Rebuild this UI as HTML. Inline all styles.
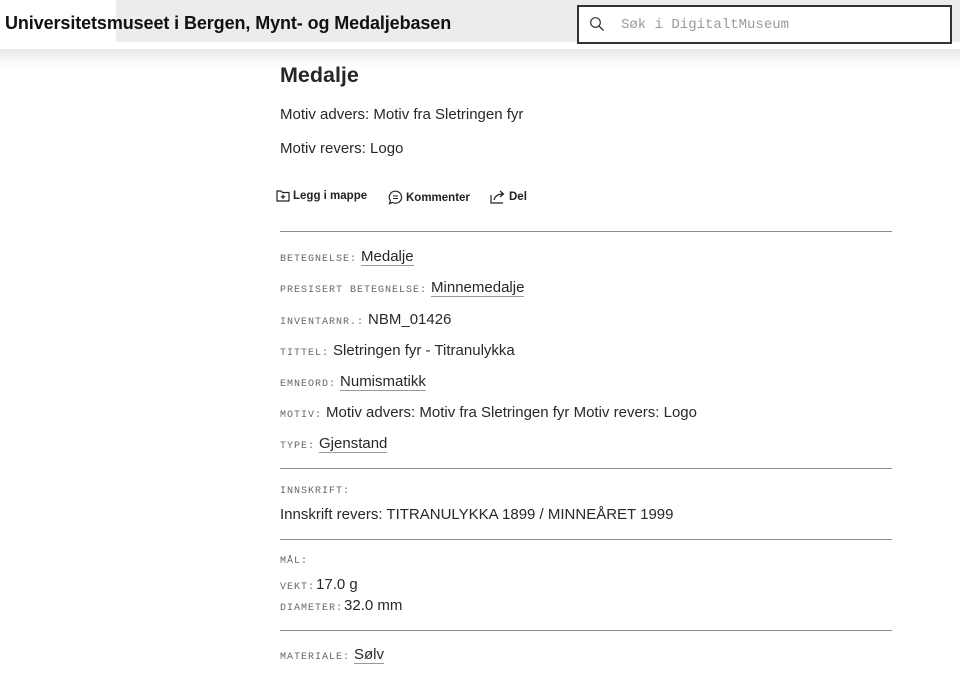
<!DOCTYPE html>
<html><head><meta charset="utf-8"><style>
*{margin:0;padding:0;box-sizing:border-box}
body{width:960px;height:678px;overflow:hidden;background:#fff;font-family:"Liberation Sans",sans-serif;color:#2b2727;position:relative}
.abs{position:absolute;white-space:nowrap}
.grayhdr{position:absolute;left:116px;top:0;width:844px;height:42px;background:#ececec}
.shadow{position:absolute;left:0;top:49px;width:960px;height:18px;background:linear-gradient(#e8e8e8,#fff)}
.title{left:5px;top:13px;font-size:18px;font-weight:bold;color:#111;letter-spacing:-0.1px}
.search{position:absolute;left:577px;top:5px;width:375px;height:39px;border:2px solid #333;background:#fff}
.ph{left:42px;top:10px;font-family:"Liberation Mono",monospace;font-size:14px;color:#999}
h1{position:absolute;left:280px;top:63px;font-size:21.5px;font-weight:bold;color:#2b2525}
.p{left:280px;font-size:15px}
.act{top:190px;font-size:11.5px;font-weight:bold;color:#222;display:flex;align-items:center;gap:3px}
.hr{position:absolute;left:280px;width:612px;height:1px;background:#8a8a8a}
.row{left:280px;font-size:15px;display:flex;align-items:baseline}
.lb{font-family:"Liberation Mono",monospace;font-size:10px;letter-spacing:1px;color:#666;margin-right:4px}
.u{border-bottom:1px solid #999}
</style></head><body>
<div class="grayhdr"></div>
<div class="shadow"></div>
<div class="abs title">Universitetsmuseet i Bergen, Mynt- og Medaljebasen</div>
<div class="search">
<svg style="position:absolute;left:10px;top:9px" width="16" height="16" viewBox="0 0 16 16"><circle cx="6.5" cy="6.5" r="4.8" fill="none" stroke="#333" stroke-width="1.2"/><path d="M10 10l4.5 4.5" stroke="#333" stroke-width="1.3"/></svg>
<div class="abs ph">Søk i DigitaltMuseum</div>
</div>
<h1>Medalje</h1>
<div class="abs p" style="top:106px">Motiv advers: Motiv fra Sletringen fyr</div>
<div class="abs p" style="top:140px">Motiv revers: Logo</div>
<div class="abs act" style="left:276px"><svg width="14" height="12" viewBox="0 0 14 12"><path d="M1 1h4l1.5 1.5H13V11H1z" fill="none" stroke="#222" stroke-width="1.2"/><path d="M7 4.5v4.5M4.8 6.75h4.4" stroke="#222" stroke-width="1.2"/></svg>Legg i mappe</div>
<div class="abs act" style="left:388px"><svg width="15" height="15" viewBox="0 0 15 15"><path d="M7.5 1.2a6.2 6 0 1 1-3.2 11.2L1.5 13.6l.9-2.9A6.2 6 0 0 1 7.5 1.2z" fill="none" stroke="#222" stroke-width="1.2"/><path d="M5 6h5M5 8.5h5" stroke="#222" stroke-width="1.1"/></svg>Kommenter</div>
<div class="abs act" style="left:490px"><svg width="16" height="14" viewBox="0 0 16 14"><path d="M1 5v8h12" fill="none" stroke="#222" stroke-width="1.2"/><path d="M4 10c1-4 4-6 9-6M10 1l3.5 3L10 7" fill="none" stroke="#222" stroke-width="1.2"/></svg>Del</div>
<div class="hr" style="top:231px"></div>
<div class="abs row" style="top:248px"><span class="lb">BETEGNELSE:</span><span class="u">Medalje</span></div>
<div class="abs row" style="top:279px"><span class="lb">PRESISERT BETEGNELSE:</span><span class="u">Minnemedalje</span></div>
<div class="abs row" style="top:311px"><span class="lb">INVENTARNR.:</span><span>NBM_01426</span></div>
<div class="abs row" style="top:342px"><span class="lb">TITTEL:</span><span>Sletringen fyr - Titranulykka</span></div>
<div class="abs row" style="top:373px"><span class="lb">EMNEORD:</span><span class="u">Numismatikk</span></div>
<div class="abs row" style="top:404px"><span class="lb">MOTIV:</span><span>Motiv advers: Motiv fra Sletringen fyr Motiv revers: Logo</span></div>
<div class="abs row" style="top:435px"><span class="lb">TYPE:</span><span class="u">Gjenstand</span></div>
<div class="hr" style="top:468px"></div>
<div class="abs row" style="top:486px"><span class="lb">INNSKRIFT:</span></div>
<div class="abs p" style="top:506px">Innskrift revers: TITRANULYKKA 1899 / MINNEÅRET 1999</div>
<div class="hr" style="top:539px"></div>
<div class="abs row" style="top:556px"><span class="lb">MÅL:</span></div>
<div class="abs row" style="top:576px"><span class="lb" style="margin-right:1px">VEKT:</span><span>17.0 g</span></div>
<div class="abs row" style="top:597px"><span class="lb" style="margin-right:1px">DIAMETER:</span><span>32.0 mm</span></div>
<div class="hr" style="top:630px"></div>
<div class="abs row" style="top:646px"><span class="lb">MATERIALE:</span><span class="u">Sølv</span></div>
</body></html>
